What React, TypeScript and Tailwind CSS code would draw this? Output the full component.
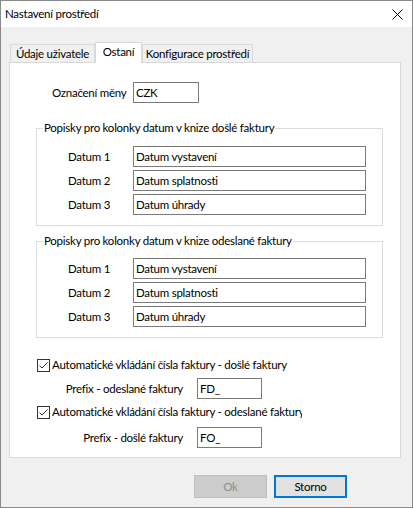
import React from 'react';

type Row = { label: string; value: string };

const prijate: Row[] = [
    { label: 'Datum 1', value: 'Datum vystavení' },
    { label: 'Datum 2', value: 'Datum splatnosti' },
    { label: 'Datum 3', value: 'Datum úhrady' },
];

const odeslane: Row[] = [
    { label: 'Datum 1', value: 'Datum vystavení' },
    { label: 'Datum 2', value: 'Datum splatnosti' },
    { label: 'Datum 3', value: 'Datum úhrady' },
];

function TextBox({ value, width }: { value: string; width: string }) {
    return (
        <div className={`${width} h-[21px] border border-[#7a7a7a] bg-white pl-[2px] flex items-center overflow-hidden`}>
            {value}
        </div>
    );
}

function CheckBox({ label }: { label: string }) {
    return (
        <div className="h-[16px] flex items-center pl-[27px]">
            <div className="w-[13px] h-[13px] border border-[#333333] bg-white flex items-center justify-center shrink-0">
                <svg width="11" height="11" viewBox="0 0 11 11">
                    <path d="M1.5 5.5 L4 8 L9.5 2.5" fill="none" stroke="#333333" strokeWidth="1" />
                </svg>
            </div>
            <span className="ml-[2px] w-[250px] overflow-hidden">{label}</span>
        </div>
    );
}

function DateGroup({ title, rows, className }: { title: string; rows: Row[]; className: string }) {
    return (
        <fieldset className={`ml-[26px] w-[347px] border border-[#dcdcdc] pb-[10px] ${className}`}>
            <legend className="ml-[6px] px-[1px] leading-[16px]">{title}</legend>
            <div className="flex flex-col gap-[3px]">
                {rows.map((r) => (
                    <div key={r.label} className="flex items-center pl-[31px]">
                        <span className="w-[65px]">{r.label}</span>
                        <TextBox value={r.value} width="w-[233px]" />
                    </div>
                ))}
            </div>
        </fieldset>
    );
}

export default function App() {
    return (
        <div className="w-[413px] h-[508px] border border-[#8a8a8a] bg-[#f0f0f0] flex flex-col text-[11.5px] tracking-[-0.25px] leading-[16px] text-black whitespace-nowrap font-['Lato',sans-serif]">
            {/* Title bar */}
            <div className="h-[26px] bg-white flex items-center justify-between pl-[4px] pr-[9px] shrink-0">
                <span>Nastavení prostředí</span>
                <svg width="11" height="11" viewBox="0 0 11 11">
                    <path d="M0.5 0.5 L10.5 10.5 M10.5 0.5 L0.5 10.5" stroke="#000" strokeWidth="1" />
                </svg>
            </div>

            <div className="flex flex-col pl-[8px] pt-[15px]">
                {/* Tabs */}
                <div className="h-[20px] flex items-end pl-[1px]">
                    <div className="w-[85px] h-[18px] border border-b-0 border-[#d9d9d9] flex items-center justify-center">
                        Údaje uživatele
                    </div>
                    <div className="w-[47px] h-[21px] -mb-[1px] relative z-10 border border-b-0 border-[#d9d9d9] bg-white flex items-start pt-[1px] justify-center">
                        Ostaní
                    </div>
                    <div className="w-[111px] h-[18px] border border-b-0 border-[#d9d9d9] flex items-center justify-center">
                        Konfigurace prostředí
                    </div>
                </div>

                {/* Tab page */}
                <div className="w-[392px] h-[396px] border border-[#d9d9d9] bg-white flex flex-col">
                    <div className="mt-[19px] flex items-center pl-[42px]">
                        <span className="w-[81px]">Označení měny</span>
                        <TextBox value="CZK" width="w-[66px]" />
                    </div>

                    <DateGroup title="Popisky pro kolonky datum v knize došlé faktury" rows={prijate} className="mt-[17px] pt-[10px]" />
                    <DateGroup title="Popisky pro kolonky datum v knize odeslané faktury" rows={odeslane} className="mt-[7px] pt-[9px]" />

                    <div className="mt-[19px]">
                        <CheckBox label="Automatické vkládání čísla faktury - došlé faktury" />
                    </div>
                    <div className="mt-[5px] flex items-center">
                        <span className="w-[173px] text-right">Prefix - odeslané faktury</span>
                        <div className="ml-[14px]">
                            <TextBox value="FD_" width="w-[65px]" />
                        </div>
                    </div>
                    <div className="mt-[5px]">
                        <CheckBox label="Automatické vkládání čísla faktury - odeslané faktury" />
                    </div>
                    <div className="mt-[7px] flex items-center">
                        <span className="w-[173px] text-right">Prefix - došlé faktury</span>
                        <div className="ml-[14px]">
                            <TextBox value="FO_" width="w-[65px]" />
                        </div>
                    </div>
                </div>

                {/* Dialog buttons */}
                <div className="mt-[17px] flex gap-[7px] pl-[185px]">
                    <button className="w-[73px] h-[23px] border border-[#bfbfbf] bg-[#cccccc] text-[#8d8d8d]" disabled>
                        Ok
                    </button>
                    <button className="w-[73px] h-[23px] border-2 border-[#0078d7] bg-[#e1e1e1]">
                        Storno
                    </button>
                </div>
            </div>
        </div>
    );
}
